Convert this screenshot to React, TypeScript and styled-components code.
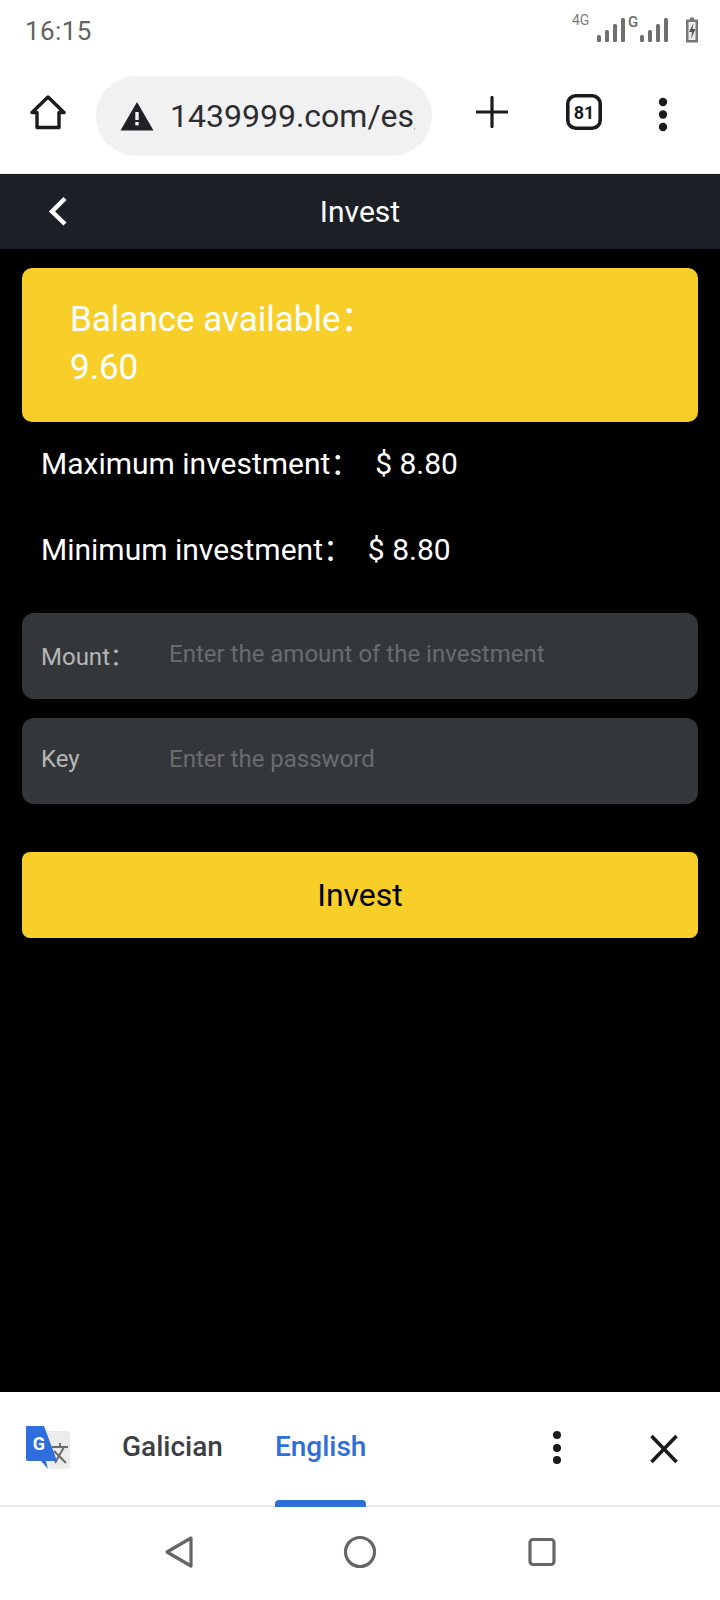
import React from "react";
import styled, { createGlobalStyle } from "styled-components";

const Global = createGlobalStyle`
  html, body { margin: 0; padding: 0; background: #000; }
  * { box-sizing: border-box; }
  #root { font-family: Roboto, "Noto Sans CJK SC", sans-serif; }
`;

const Screen = styled.div`
  width: 720px;
  height: 1600px;
  display: flex;
  flex-direction: column;
  background: #000;
  overflow: hidden;
`;

const StatusBar = styled.div`
  height: 60px;
  background: #fff;
  display: flex;
  align-items: center;
  justify-content: space-between;
  padding: 0 0 0 25px;
`;

const Time = styled.span`
  font-size: 26px;
  color: #636363;
  letter-spacing: 0.4px;
  margin-top: 2px;
`;

const StatusIcons = styled.svg`
  width: 140px;
  height: 60px;
  display: block;
  margin-right: 12px;
`;

const Toolbar = styled.div`
  height: 114px;
  background: #fff;
  border-bottom: 1px solid #e8eaed;
  display: flex;
  align-items: flex-start;
  padding: 16px 0 0 30px;
`;

const ToolIcon = styled.svg<{ $left: number; $top: number }>`
  display: block;
  flex: none;
  margin-left: ${(p) => p.$left}px;
  margin-top: ${(p) => p.$top}px;
`;

const UrlPill = styled.div`
  width: 336px;
  height: 80px;
  flex: none;
  margin-left: 30px;
  border-radius: 40px;
  background: #f1f1f1;
  display: flex;
  align-items: center;
  padding: 0 17px 0 24px;
`;

const UrlText = styled.span`
  font-size: 32px;
  color: #2b2d30;
  margin-left: 16px;
  white-space: nowrap;
  overflow: hidden;
  flex: 1;
  min-width: 0;
`;

const Header = styled.div`
  height: 75px;
  background: #1c1f26;
  position: relative;
  display: flex;
  align-items: center;
  justify-content: center;
`;

const BackIcon = styled.svg`
  position: absolute;
  left: 46px;
  top: 21px;
`;

const Title = styled.span`
  font-size: 30px;
  color: #fff;
`;

const Content = styled.main`
  flex: 1;
  min-height: 0;
  background: #000;
  padding: 19px 22px 0;
  display: flex;
  flex-direction: column;
`;

const BalanceCard = styled.div`
  height: 154px;
  border-radius: 10px;
  background: #f8cf28;
  color: #fff;
  font-size: 35px;
  line-height: 48px;
  padding: 28px 48px 0;
`;

const LimitRow = styled.div<{ $top: number }>`
  margin-top: ${(p) => p.$top}px;
  padding-left: 19px;
  font-size: 30px;
  line-height: 40px;
  color: #fff;
  white-space: pre;
`;

const Field = styled.label<{ $top: number }>`
  margin-top: ${(p) => p.$top}px;
  height: 86px;
  border-radius: 12px;
  background: #34373a;
  display: flex;
  align-items: center;
  padding-left: 19px;
`;

const FieldLabel = styled.span`
  width: 128px;
  flex: none;
  font-size: 24px;
  color: #b5b6b7;
  margin-top: -4px;
`;

const FieldInput = styled.input`
  flex: 1;
  min-width: 0;
  margin-top: -4px;
  border: 0;
  outline: 0;
  padding: 0;
  background: transparent;
  font: inherit;
  font-size: 24px;
  color: #fff;
  &::placeholder {
    color: #696c6e;
    opacity: 1;
  }
`;

const SubmitButton = styled.button`
  margin-top: 48px;
  height: 86px;
  border: 0;
  border-radius: 8px;
  background: #f8cf28;
  color: #000;
  font: inherit;
  font-size: 32px;
  padding: 0;
`;

const TranslateBar = styled.div`
  height: 113px;
  background: #fff;
  display: flex;
  align-items: flex-start;
  padding-left: 26px;
`;

const LangGroup = styled.div`
  display: flex;
  margin-left: 50px;
  height: 113px;
`;

const LangTab = styled.span<{ $active?: boolean }>`
  position: relative;
  font-size: 28px;
  font-weight: 500;
  line-height: 113px;
  margin-top: -2px;
  margin-right: ${(p) => (p.$active ? 0 : 52)}px;
  color: ${(p) => (p.$active ? "#2f6fd8" : "#3c4043")};
  ${(p) =>
    p.$active
      ? `&::after {
    content: "";
    position: absolute;
    left: 0;
    right: 0;
    bottom: -2px;
    height: 7px;
    background: #2f6fd8;
    border-radius: 4px 4px 0 0;
  }`
      : ""}
`;

const BarActions = styled.div`
  margin-left: auto;
  display: flex;
  align-items: flex-start;
`;

const NavBar = styled.nav`
  flex: none;
  height: 95px;
  background: #fff;
  border-top: 2px solid #e8eaed;
  display: flex;
  align-items: flex-start;
  padding: 28px 0 0 164px;
`;

const StatusGlyphs = () => (
  <StatusIcons viewBox="0 0 140 60">
    <text x="4" y="25" fontFamily="Roboto" fontSize="14" fill="#7d7d7d">4G</text>
    <g fill="#6f6f6f">
      <rect x="29" y="35" width="4" height="7" rx="1.5" />
      <rect x="37" y="30" width="4" height="12" rx="1.5" />
      <rect x="45" y="24" width="4" height="18" rx="1.5" />
      <rect x="53" y="18" width="4" height="24" rx="1.5" />
      <rect x="72" y="35" width="4" height="7" rx="1.5" />
      <rect x="80" y="30" width="4" height="12" rx="1.5" />
      <rect x="88" y="24" width="4" height="18" rx="1.5" />
      <rect x="96" y="18" width="4" height="24" rx="1.5" />
    </g>
    <text x="60" y="27" fontFamily="Roboto" fontSize="15" fontWeight="500" fill="#6a6a6a">G</text>
    <path d="M118 19.5h4v-2h4v2h4v23h-12z" fill="#777" />
    <path d="M120.5 22h7v18h-7z" fill="#eee" />
    <path d="M125.5 23l-4.500 9h3l-1 7 4.500-10h-3z" fill="#555" />
  </StatusIcons>
);

export default function App() {
  return (
    <Screen>
      <Global />
      <StatusBar>
        <Time>16:15</Time>
        <StatusGlyphs />
      </StatusBar>
      <Toolbar>
        <ToolIcon $left={0} $top={18} width="36" height="36" viewBox="0 0 36 36" fill="none">
          <path d="M18 3 L34 18.500 H29 V33.500 H7 V18.500 H2 Z" stroke="#1b1b1b" strokeWidth="3.400" strokeLinejoin="round" />
        </ToolIcon>
        <UrlPill>
          <svg width="34" height="30" viewBox="0 0 34 30" style={{ flex: "none" }}>
            <path d="M17 1 L33.500 29.500 H0.500 Z" fill="#202124" />
            <rect x="15.300" y="11" width="3.400" height="8" fill="#f1f1f1" />
            <rect x="15.300" y="21" width="3.400" height="3.400" fill="#f1f1f1" />
          </svg>
          <UrlText>1439999.com/es/</UrlText>
        </UrlPill>
        <ToolIcon $left={44} $top={20} width="32" height="32" viewBox="0 0 32 32" fill="none">
          <path d="M16 1.500V30.500M1 16H31" stroke="#1b1b1b" strokeWidth="3.200" strokeLinecap="round" />
        </ToolIcon>
        <ToolIcon $left={58} $top={18} width="36" height="36" viewBox="0 0 36 36" fill="none">
          <rect x="1.800" y="1.800" width="32.400" height="32.400" rx="8" stroke="#1b1b1b" strokeWidth="3.600" />
          <text x="18" y="24.500" textAnchor="middle" fontFamily="Roboto" fontSize="18" fontWeight="700" fill="#1b1b1b">81</text>
        </ToolIcon>
        <ToolIcon $left={53} $top={21} width="16" height="36" viewBox="0 0 16 36" fill="#1b1b1b">
          <circle cx="8" cy="5" r="4.200" />
          <circle cx="8" cy="17.500" r="4.200" />
          <circle cx="8" cy="30" r="4.200" />
        </ToolIcon>
      </Toolbar>
      <Header>
        <BackIcon width="24" height="32" viewBox="0 0 24 32" fill="none">
          <path d="M19 3.500 L6 16.500 L19 29" stroke="#fff" strokeWidth="4.500" />
        </BackIcon>
        <Title>Invest</Title>
      </Header>
      <Content>
        <BalanceCard>
          Balance available：
          <br />
          9.60
        </BalanceCard>
        <LimitRow $top={22}>{"Maximum investment：  $ 8.80"}</LimitRow>
        <LimitRow $top={46}>{"Minimum investment：  $ 8.80"}</LimitRow>
        <Field $top={43}>
          <FieldLabel>Mount：</FieldLabel>
          <FieldInput placeholder="Enter the amount of the investment" />
        </Field>
        <Field $top={19}>
          <FieldLabel>Key</FieldLabel>
          <FieldInput placeholder="Enter the password" />
        </Field>
        <SubmitButton>Invest</SubmitButton>
      </Content>
      <TranslateBar>
        <ToolIcon $left={0} $top={33} width="46" height="46" viewBox="0 0 46 46">
          <path d="M18 6 H42 a2 2 0 0 1 2 2 V42 a2 2 0 0 1 -2 2 H23 Z" fill="#ececec" />
          <path d="M26 22 H42 M34 18 V22 M29 38 L38 22 M28 26 L40 38" stroke="#6b6b6b" strokeWidth="2" fill="none" />
          <path d="M2 1 H20 L33 36 H22 L24 44 L17 36 H4 a2 2 0 0 1 -2 -2 Z" fill="#2f6fdd" transform="translate(-2 0)" />
          <text x="13" y="25" textAnchor="middle" fontFamily="Roboto" fontSize="18" fontWeight="700" fill="#fff">G</text>
        </ToolIcon>
        <LangGroup>
          <LangTab>Galician</LangTab>
          <LangTab $active>English</LangTab>
        </LangGroup>
        <BarActions>
          <ToolIcon $left={0} $top={38} width="16" height="36" viewBox="0 0 16 36" fill="#1b1b1b">
            <circle cx="8" cy="5" r="4" />
            <circle cx="8" cy="18" r="4" />
            <circle cx="8" cy="30" r="4" />
          </ToolIcon>
          <ToolIcon $left={83} $top={41} width="32" height="32" viewBox="0 0 32 32" fill="none" style={{ marginRight: 40 }}>
            <path d="M3.500 3L28.500 29M28.500 3L3.500 29" stroke="#1b1b1b" strokeWidth="3.600" />
          </ToolIcon>
        </BarActions>
      </TranslateBar>
      <NavBar>
        <ToolIcon $left={0} $top={0} width="30" height="34" viewBox="0 0 30 34" fill="none">
          <path d="M27 3 L3 17 L27 31 Z" stroke="#666" strokeWidth="3.200" strokeLinejoin="round" />
        </ToolIcon>
        <ToolIcon $left={149} $top={0} width="34" height="34" viewBox="0 0 34 34" fill="none">
          <circle cx="17" cy="17" r="14.500" stroke="#666" strokeWidth="3.200" />
        </ToolIcon>
        <ToolIcon $left={150} $top={2} width="30" height="30" viewBox="0 0 30 30" fill="none">
          <rect x="3" y="2.500" width="24" height="25" rx="3" stroke="#666" strokeWidth="3.200" />
        </ToolIcon>
      </NavBar>
    </Screen>
  );
}
